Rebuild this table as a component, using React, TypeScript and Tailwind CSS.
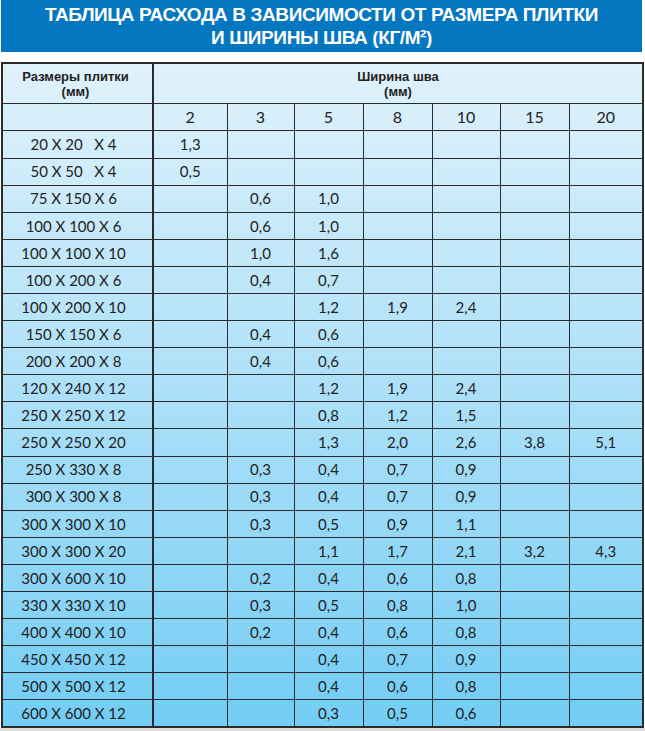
import React from "react";

const cols = ["2", "3", "5", "8", "10", "15", "20"];
const widths = ["w-[74px]", "w-[67px]", "w-[69px]", "w-[69px]", "w-[68px]", "w-[69px]", "w-[74px]"];

const rows: [string, string[]][] = [
  ["20 X 20   X 4", ["1,3", "", "", "", "", "", ""]],
  ["50 X 50   X 4", ["0,5", "", "", "", "", "", ""]],
  ["75 X 150 X 6", ["", "0,6", "1,0", "", "", "", ""]],
  ["100 X 100 X 6", ["", "0,6", "1,0", "", "", "", ""]],
  ["100 X 100 X 10", ["", "1,0", "1,6", "", "", "", ""]],
  ["100 X 200 X 6", ["", "0,4", "0,7", "", "", "", ""]],
  ["100 X 200 X 10", ["", "", "1,2", "1,9", "2,4", "", ""]],
  ["150 X 150 X 6", ["", "0,4", "0,6", "", "", "", ""]],
  ["200 X 200 X 8", ["", "0,4", "0,6", "", "", "", ""]],
  ["120 X 240 X 12", ["", "", "1,2", "1,9", "2,4", "", ""]],
  ["250 X 250 X 12", ["", "", "0,8", "1,2", "1,5", "", ""]],
  ["250 X 250 X 20", ["", "", "1,3", "2,0", "2,6", "3,8", "5,1"]],
  ["250 X 330 X 8", ["", "0,3", "0,4", "0,7", "0,9", "", ""]],
  ["300 X 300 X 8", ["", "0,3", "0,4", "0,7", "0,9", "", ""]],
  ["300 X 300 X 10", ["", "0,3", "0,5", "0,9", "1,1", "", ""]],
  ["300 X 300 X 20", ["", "", "1,1", "1,7", "2,1", "3,2", "4,3"]],
  ["300 X 600 X 10", ["", "0,2", "0,4", "0,6", "0,8", "", ""]],
  ["330 X 330 X 10", ["", "0,3", "0,5", "0,8", "1,0", "", ""]],
  ["400 X 400 X 10", ["", "0,2", "0,4", "0,6", "0,8", "", ""]],
  ["450 X 450 X 12", ["", "", "0,4", "0,7", "0,9", "", ""]],
  ["500 X 500 X 12", ["", "", "0,4", "0,6", "0,8", "", ""]],
  ["600 X 600 X 12", ["", "", "0,3", "0,5", "0,6", "", ""]],
];

const body = "font-['Lato','DejaVu_Sans',sans-serif] text-[15px] text-[#222]";
const head = "font-['Liberation_Sans',Arial,sans-serif] font-bold text-[13px] leading-[15px] text-[#222]";

export default function App() {
  return (
    <div className="w-[645px] h-[731px] bg-white flex flex-col">
      <div className="ml-[1px] w-[641px] h-[52px] bg-[#0577c0] flex flex-col items-center justify-center">
        <div className="font-['Liberation_Sans',Arial,sans-serif] font-bold text-[19px] leading-[23px] text-white text-center tracking-[-0.4px]">
          <div>ТАБЛИЦА РАСХОДА В ЗАВИСИМОСТИ ОТ РАЗМЕРА ПЛИТКИ</div>
          <div>И ШИРИНЫ ШВА (КГ/М²)</div>
        </div>
      </div>
      <div className="h-[10px]" />
      <div className="ml-[1px] w-[641px]">
        <table className="w-[641px] border-collapse border-2 border-[#2b2b2b] bg-gradient-to-b from-[#e0f2fb] to-[#72cdf4] table-fixed">
          <colgroup>
            <col className="w-[151px]" />
            {widths.map((w, i) => (
              <col key={i} className={w} />
            ))}
          </colgroup>
          <tbody>
            <tr className="h-[41px]">
              <td className={`${head} text-center align-top pt-[5px] border-r-2 border-b border-[#2b2b2b] pr-[4px]`}>
                Размеры плитки
                <br />
                (мм)
              </td>
              <td colSpan={7} className={`${head} text-center align-top pt-[5px] border-b border-[#2b2b2b]`}>
                Ширина шва
                <br />
                (мм)
              </td>
            </tr>
            <tr className="h-[27px]">
              <td className="border-r-2 border-b border-[#2b2b2b]" />
              {cols.map((c) => (
                <td key={c} className={`${body} text-[16px] text-center border border-[#2b2b2b] p-0`}>
                  {c}
                </td>
              ))}
            </tr>
            {rows.map(([size, vals], ri) => (
              <tr key={ri} className="h-[27.1px]">
                <td className={`${body} whitespace-pre text-center pr-[8px] border-r-2 border-b border-[#2b2b2b] p-0`}>
                  {size}
                </td>
                {vals.map((v, ci) => (
                  <td key={ci} className={`${body} text-center border border-[#2b2b2b] p-0`}>
                    {v}
                  </td>
                ))}
              </tr>
            ))}
          </tbody>
        </table>
      </div>
      <div className="flex-1" />
      <div className="h-[3px] bg-[#dcdcdc]" />
    </div>
  );
}
